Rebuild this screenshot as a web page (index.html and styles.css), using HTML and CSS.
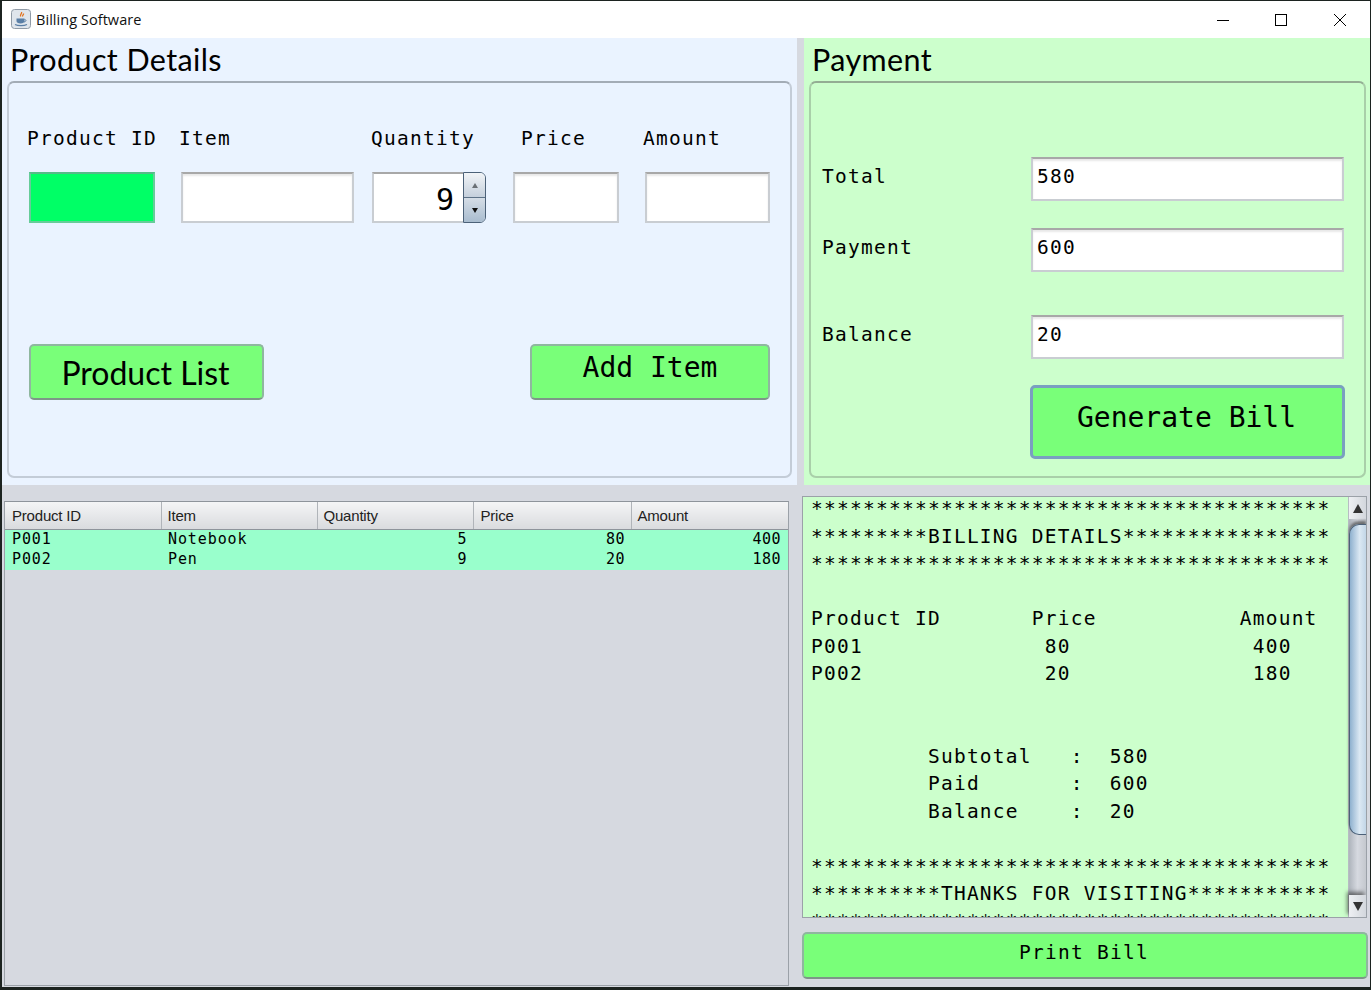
FILE: index.html
```html
<!DOCTYPE html>
<html lang="en">
  <head>
    <meta charset="UTF-8" />
    <meta name="viewport" content="width=device-width, initial-scale=1.0" />
    <title>Billing Software</title>
    <link rel="stylesheet" href="styles.css">
  </head>
  <body>
    <div class="window">
      <header class="titlebar">
        <svg class="app-icon" width="20" height="20" viewBox="0 0 20 20">
          <rect x="0.5" y="0.5" width="19" height="19" rx="3" fill="#dfe5ec" stroke="#8f9aa6" />
          <path d="M10.5 3c1 1.5-2 2.5-.8 4.5M12.5 4.5c.5 1-1.500 1.800-.8 3" fill="none" stroke="#e2711d" stroke-width="1.300" />
          <path d="M5.500 9.500h8V12c0 1.500-1.500 2.500-4 2.500s-4-1-4-2.500z" fill="#5a7fa6" />
          <path d="M13.500 10.500c2 0 2 2-.5 2.500" fill="none" stroke="#5a7fa6" />
          <path d="M4 15.500c3 1.500 9 1.500 12 0" fill="none" stroke="#5a7fa6" stroke-width="1.200" />
        </svg>
        <span class="app-title">Billing Software</span>
        <div class="caption-btns">
          <svg width="12" height="12" viewBox="0 0 12 12"><path d="M0 6.500h12" stroke="#000" fill="none" /></svg>
          <svg width="12" height="12" viewBox="0 0 12 12"><rect x="0.500" y="0.500" width="11" height="11" stroke="#000" fill="none" /></svg>
          <svg width="12" height="12" viewBox="0 0 12 12"><path d="M0 0l12 12M12 0L0 12" stroke="#000" fill="none" /></svg>
        </div>
      </header>

      <div class="top">
        <section class="panel panel-blue">
          <h2 class="panel-title">Product Details</h2>
          <div class="box box-product">
            <div class="label-row">
              <span class="lbl lbl-id">Product ID</span>
              <span class="lbl lbl-item">Item</span>
              <span class="lbl lbl-qty">Quantity</span>
              <span class="lbl lbl-price">Price</span>
              <span class="lbl">Amount</span>
            </div>
            <div class="field-row">
              <input class="field field-id" type="text" />
              <input class="field field-item" type="text" />
              <div class="spinner">
                <span class="spinner-value">9</span>
                <div class="spinner-btns">
                  <span class="spin-up"><i class="tri tri-up"></i></span>
                  <span class="spin-down"><i class="tri tri-down"></i></span>
                </div>
              </div>
              <input class="field field-price" type="text" />
              <input class="field field-amount" type="text" />
            </div>
            <div class="btn-row">
              <button class="btn btn-list">Product List</button>
              <button class="btn btn-add">Add Item</button>
            </div>
          </div>
        </section>

        <section class="panel panel-green">
          <h2 class="panel-title">Payment</h2>
          <div class="box box-payment">
            <div class="pay-row pay-total">
              <span class="lbl">Total</span>
              <input class="field pay-field" type="text" value="580" />
            </div>
            <div class="pay-row pay-paid">
              <span class="lbl">Payment</span>
              <input class="field pay-field" type="text" value="600" />
            </div>
            <div class="pay-row pay-balance">
              <span class="lbl">Balance</span>
              <input class="field pay-field" type="text" value="20" />
            </div>
            <button class="btn btn-generate">Generate Bill</button>
          </div>
        </section>
      </div>

      <div class="bottom">
        <div class="table-wrap">
          <table class="items">
            <thead>
              <tr>
                <th class="col-id">Product ID</th>
                <th class="col-item">Item</th>
                <th class="col-qty">Quantity</th>
                <th class="col-price">Price</th>
                <th>Amount</th>
              </tr>
            </thead>
            <tbody>
              <tr>
                <td>P001</td>
                <td>Notebook</td>
                <td class="num">5</td>
                <td class="num">80</td>
                <td class="num">400</td>
              </tr>
              <tr>
                <td>P002</td>
                <td>Pen</td>
                <td class="num">9</td>
                <td class="num">20</td>
                <td class="num">180</td>
              </tr>
            </tbody>
          </table>
        </div>

        <div class="bill-col">
          <div class="bill">
            <pre class="bill-text">****************************************
*********BILLING DETAILS****************
****************************************

Product ID       Price           Amount
P001              80              400
P002              20              180


         Subtotal   :  580
         Paid       :  600
         Balance    :  20

****************************************
**********THANKS FOR VISITING***********
****************************************</pre>
            <div class="scrollbar">
              <span class="arrow"><i class="tri tri-up tri-big"></i></span>
              <div class="track"><div class="thumb"></div></div>
              <span class="arrow"><i class="tri tri-down tri-big"></i></span>
            </div>
          </div>
          <button class="btn btn-print">Print Bill</button>
        </div>
      </div>
    </div>
  </body>
</html>
```

FILE: styles.css
```css
* {
  box-sizing: border-box;
}

body {
  margin: 0;
  height: 990px;
  overflow: hidden;
  background-color: #1c2320;
  padding: 1px 1px 3px 2px;
  font-family: "DejaVu Sans Mono", monospace;
  color: #000;
}

.window {
  height: 986px;
  background-color: #d6d9e0;
  display: flex;
  flex-direction: column;
}

.titlebar {
  height: 37px;
  flex: none;
  background-color: #fff;
  display: flex;
  align-items: center;
  padding-left: 9px;
}

.app-icon {
  margin-top: -2px;
}

.app-title {
  margin-left: 5px;
  font-family: "Open Sans", sans-serif;
  font-size: 14.500px;
  letter-spacing: 0.050px;
  color: #111;
}

.caption-btns {
  margin-left: auto;
  margin-right: 24px;
  display: flex;
  gap: 46px;
}

.caption-btns svg:last-child {
  margin-left: 1px;
}

.top {
  height: 447px;
  flex: none;
  display: flex;
  gap: 7px;
}

.panel {
  padding: 0 5px 7px 5px;
  display: flex;
  flex-direction: column;
}

.panel-blue {
  width: 795px;
  background-color: #eaf3ff;
}

.panel-green {
  flex: 1;
  padding-right: 4px;
  background-color: #ccffcc;
}

.panel-title {
  margin: 0 0 0 3px;
  height: 43px;
  font-family: "Lato", sans-serif;
  font-weight: 400;
  font-size: 30.500px;
  line-height: 42px;
  letter-spacing: 0.400px;
}

.box {
  flex: 1;
  border: 2px solid #c3ccd7;
  border-top-color: #a3acb6;
  border-radius: 7px;
  padding-left: 20px;
}

.box-payment {
  border-color: #a9cfa9;
  border-top-color: #93ad93;
  padding-left: 11px;
  padding-top: 74px;
}

.lbl {
  font-size: 19.500px;
  letter-spacing: 1.250px;
  line-height: 24px;
  white-space: pre;
}

.label-row {
  display: flex;
  padding-top: 44px;
  margin-left: -2px;
}

.lbl-id {
  width: 152px;
}

.lbl-item {
  width: 192px;
}

.lbl-qty {
  width: 150px;
}

.lbl-price {
  width: 122px;
}

.field-row {
  display: flex;
  margin-top: 21px;
  align-items: flex-start;
}

.field {
  height: 51px;
  border: 2px solid #c9cdd2;
  border-top-color: #a8a8a8;
  box-shadow: inset 0 2px 2px #e8e8e8;
  background-color: #fff;
  padding: 0 4px;
  margin: 0;
  border-radius: 0;
  font-family: "DejaVu Sans Mono", monospace;
  color: #000;
}

.field-id {
  width: 126px;
  background-color: #00ff66;
  border-color: #66cc99;
  border-top-color: #55bb88;
  box-shadow: none;
}

.field-item {
  width: 173px;
  margin-left: 26px;
}

.spinner {
  width: 114px;
  height: 51px;
  margin-left: 18px;
  display: flex;
}

.spinner-value {
  flex: 1;
  border: 2px solid #c9cdd2;
  border-top-color: #a8a8a8;
  border-right: none;
  background-color: #fff;
  text-align: right;
  padding-right: 9px;
  font-size: 30px;
  line-height: 52px;
}

.spinner-btns {
  width: 23px;
  display: flex;
  flex-direction: column;
  border: 1px solid #4c6178;
  border-radius: 0 6px 6px 0;
  overflow: hidden;
}

.spin-up,
.spin-down {
  flex: 1;
  display: flex;
  align-items: center;
  justify-content: center;
}

.spin-up {
  background: linear-gradient(#f1f4f7, #c5d0dc);
  border-bottom: 1px solid #5d7287;
}

.spin-down {
  background: linear-gradient(#d5dde6, #a9bccf);
}

.tri {
  display: block;
  width: 0;
  height: 0;
  border-left: 3px solid transparent;
  border-right: 3px solid transparent;
}

.tri-up {
  border-bottom: 5px solid #6b7075;
}

.tri-down {
  border-top: 5px solid #111;
}

.tri-big {
  border-left-width: 5px;
  border-right-width: 5px;
  border-bottom-width: 9px;
  border-top-width: 9px;
  border-bottom-color: #333;
  border-top-color: #333;
}

.tri-big.tri-up {
  border-top: none;
}

.tri-big.tri-down {
  border-bottom: none;
}

.field-price {
  width: 106px;
  margin-left: 27px;
}

.field-amount {
  width: 125px;
  margin-left: 26px;
}

.btn-row {
  display: flex;
  justify-content: space-between;
  width: 741px;
  margin-top: 121px;
}

.btn {
  background-color: #79ff79;
  border: 2px solid #8fb79f;
  border-bottom-color: #7d9688;
  border-radius: 5px;
  padding: 0;
  color: #000;
  font-family: "DejaVu Sans Mono", monospace;
}

.btn-list {
  width: 235px;
  height: 56px;
  font-family: "Lato", sans-serif;
  font-size: 32px;
  padding-right: 2px;
}

.btn-add {
  width: 240px;
  height: 56px;
  font-size: 28px;
  padding-bottom: 10px;
}

.pay-row {
  display: flex;
  align-items: center;
  height: 44px;
}

.pay-row .lbl {
  width: 209px;
  margin-top: -4px;
}

.pay-field {
  width: 313px;
  height: 44px;
  font-size: 19.500px;
  letter-spacing: 1.250px;
  padding: 0 4px 6px;
}

.pay-paid {
  margin-top: 27px;
}

.pay-balance {
  margin-top: 43px;
}

.btn-generate {
  display: block;
  width: 315px;
  height: 74px;
  margin: 26px 0 0 208px;
  border: 3px solid #7a9fc0;
  font-size: 28px;
  padding: 0 2px 10px 0;
}

.bottom {
  flex: 1;
  display: flex;
  min-height: 0;
}

.table-wrap {
  width: 785px;
  margin: 16px 0 1px 2px;
  background-color: #d6d9e0;
  border: 1px solid #9ba1a8;
  border-top-color: #8e949b;
}

.items {
  width: 100%;
  table-layout: fixed;
  border-collapse: collapse;
}

.items th {
  height: 27px;
  padding: 1px 0 0 6px;
  text-align: left;
  font-family: "Liberation Sans", Arial, sans-serif;
  font-size: 15px;
  font-weight: 400;
  letter-spacing: -0.200px;
  color: #222;
  background: linear-gradient(#f4f5f6, #d9dbde);
  border-right: 1px solid #b0b4b9;
  border-bottom: 1px solid #8e949b;
}

.items th:last-child {
  border-right: none;
}

.items th.col-id,
.items th.col-price {
  padding-left: 7px;
}

.col-id {
  width: 156px;
}

.col-item {
  width: 156px;
}

.col-qty {
  width: 156px;
}

.col-price {
  width: 158px;
}

.items td {
  height: 20px;
  padding: 0 6px 2px 7px;
  background-color: #99ffcc;
  font-size: 15px;
  letter-spacing: 0.900px;
  line-height: 18px;
}

.items td.num {
  text-align: right;
  letter-spacing: 0.500px;
}

.items td.num:last-child {
  padding-right: 7px;
}

.bill-col {
  width: 566px;
  margin: 11px 0 0 13px;
}

.bill {
  width: 565px;
  height: 422px;
  display: flex;
  border: 1px solid #9ba1a8;
  background-color: #ccffcc;
  overflow: hidden;
}

.bill-text {
  flex: 1;
  margin: -2px 0 0;
  padding: 0 0 0 8px;
  overflow: hidden;
  font-family: "DejaVu Sans Mono", monospace;
  font-size: 19.500px;
  letter-spacing: 1.250px;
  line-height: 27.500px;
}

.scrollbar {
  width: 18px;
  flex: none;
  display: flex;
  flex-direction: column;
  background-color: #d6d9e0;
  border-left: 1px solid #b7bcc3;
}

.arrow {
  height: 22px;
  flex: none;
  display: flex;
  align-items: center;
  justify-content: center;
  background: linear-gradient(90deg, #eef0f3, #d3d7dd);
}

.arrow:last-child {
  box-shadow: -2px -3px 4px rgba(40, 40, 40, 0.6);
}

.track {
  flex: 1;
  padding: 5px 0 60px;
  background: linear-gradient(90deg, #aeb4bc, #d6d9e0 50%, #c4c8ce);
}

.thumb {
  height: 100%;
  border: 1px solid #4c6178;
  border-right: none;
  border-radius: 10px 0 0 10px;
  background: linear-gradient(90deg, #8fb1cf, #dbe8f3 60%, #c2d6e7);
  box-shadow: 0 -3px 3px rgba(40, 40, 40, 0.6);
}

.btn-print {
  display: block;
  width: 566px;
  height: 47px;
  margin-top: 14px;
  font-size: 19.500px;
  letter-spacing: 1.250px;
  padding: 0 2px 7px 0;
}
```
